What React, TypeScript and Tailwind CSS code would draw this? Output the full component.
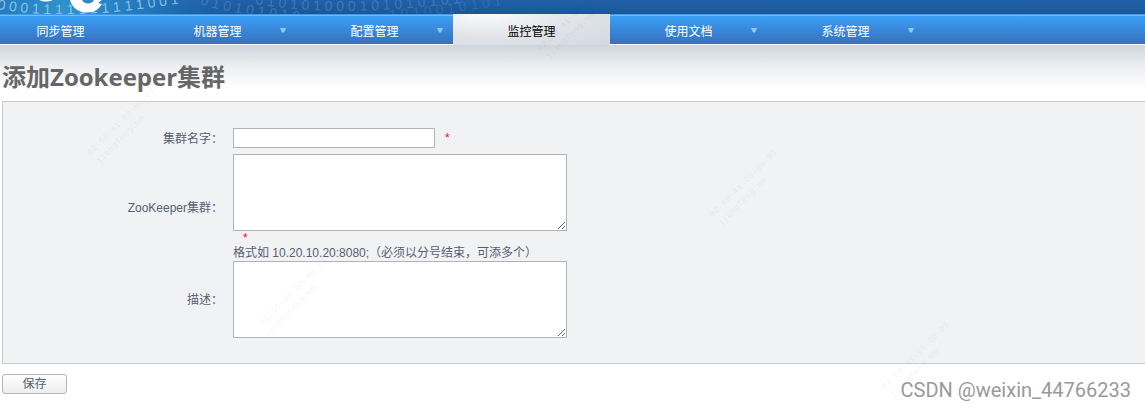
import React, { useState } from "react";
import clsx from "clsx";

type MenuItem = {
  label: string;
  active?: boolean;
  hasChildren?: boolean;
};

const menuItems: MenuItem[] = [
  { label: "同步管理" },
  { label: "机器管理", hasChildren: true },
  { label: "配置管理", hasChildren: true },
  { label: "监控管理", active: true },
  { label: "使用文档", hasChildren: true },
  { label: "系统管理", hasChildren: true },
];

const stampPositions = [
  "left-[80px] top-[114px]",
  "left-[530px] top-[10px]",
  "left-[252px] top-[284px]",
  "left-[702px] top-[176px]",
  "left-[874px] top-[348px]",
];

/* ---------- Banner with binary digits ---------- */
const Banner: React.FC = () => (
  <header className="h-3.5 overflow-hidden bg-linear-to-b from-[#2060a9] to-[#1b5797]">
    <svg
      width="620"
      height="14"
      viewBox="0 0 620 14"
      className="block font-['Liberation_Sans',sans-serif]"
      aria-hidden="true"
    >
      <defs>
        <radialGradient id="glow" gradientUnits="userSpaceOnUse" cx="65" cy="8" r="190">
          <stop offset="0" stopColor="#2f93cf" />
          <stop offset="0.45" stopColor="#2478bf" stopOpacity="0.9" />
          <stop offset="1" stopColor="#1e5da4" stopOpacity="0" />
        </radialGradient>
        <path id="arcBright" d="M-3 9 Q 70 22 182 3" />
        <path id="arcMid" d="M200 4 Q 235 15 310 22" />
        <path id="arcTop" d="M255 4 Q 335 18 460 3" />
        <path id="arcLow" d="M390 20 Q 440 15 510 4" />
      </defs>
      <rect width="300" height="14" fill="url(#glow)" />
      <g fontSize="14">
        <text fill="#9ad8ec" fillOpacity="0.8">
          <textPath href="#arcBright">0 0 0 1 1 1 1 1 1 1 1 1 1 0 0 1</textPath>
        </text>
        <text fill="#5b94cd" fillOpacity="0.5">
          <textPath href="#arcMid">0 1 0 1 0 1 0 1 0</textPath>
        </text>
        <text fill="#5b94cd" fillOpacity="0.5">
          <textPath href="#arcTop">0 1 0 1 0 1 0 0 0 1 0 1 0 1 0 1 0 1</textPath>
        </text>
        <text fill="#5b94cd" fillOpacity="0.3">
          <textPath href="#arcLow">1 0 1 0 0 1 0 1 0 1</textPath>
        </text>
      </g>
      <path d="M39 0 Q46 3 53 0 Z" fill="#fff" />
      <path
        d="M70 0 C72 8 79 12.5 87 12.5 C94 12.5 99 9 102 4 L98 3 L103 -1 L94 -1 C94 2 91 3.500 88 3.500 C85 3.500 82 2 82 -1 L70 -1 Z"
        fill="#fff"
      />
    </svg>
  </header>
);

/* ---------- Main menu ---------- */
const MainMenu: React.FC = () => (
  <nav className="overflow-hidden text-xs">
    <ul className="flex h-[31px] bg-white bg-[linear-gradient(#3d9bee_1px,#6fbcfb_1px,#6fbcfb_2px,#399ff6_2px,#3870bb)] bg-size-[100%_30px] bg-no-repeat">
      {menuItems.map((item) => (
        <li key={item.label} className="w-[157px] shrink-0 first:-ml-[18px]">
          <a
            href="#"
            className={clsx(
              "relative flex items-center justify-center",
              item.active
                ? "h-[31px] bg-[radial-gradient(ellipse_at_20%_0%,#fbfbfc_0%,#e2e4e9_50%,#d3d8e1_100%)] pt-1 text-black"
                : "h-[30px] pt-1.5 text-white"
            )}
          >
            {item.label}
            {item.hasChildren && (
              <svg
                width="6"
                height="5"
                viewBox="0 0 6 5"
                className="absolute top-3.5 right-2.5"
                aria-hidden="true"
              >
                <path d="M0 0H6L4 4.500H2Z" fill="#8cc8fa" />
              </svg>
            )}
          </a>
        </li>
      ))}
    </ul>
  </nav>
);

const labelClass = "self-center text-right";
const fieldClass = "block border border-[#b2b2b2] bg-white px-1 outline-none";

export default function App() {
  const [name, setName] = useState("");
  const [servers, setServers] = useState("");
  const [description, setDescription] = useState("");

  return (
    <div className="relative min-h-screen overflow-hidden bg-white font-['Liberation_Sans','Noto_Sans_CJK_SC',sans-serif] text-xs text-[#566072]">
      <Banner />
      <MainMenu />

      <main className="bg-linear-to-b from-[#cfd4de] via-[#eeeff2] via-50% to-white bg-size-[100%_44px] bg-no-repeat pl-0.5">
        <h1 className="pt-4 pb-2 font-['Open_Sans','Noto_Sans_CJK_SC',sans-serif] text-2xl font-bold text-[#666]">
          添加Zookeeper集群
        </h1>

        <form onSubmit={(e) => e.preventDefault()}>
          <div className="grid grid-cols-[220px_1fr] gap-x-2.5 border border-r-0 border-[#c8cacd] bg-[#f0f2f4] pt-[26px] pb-[25px]">
            <label htmlFor="name" className={clsx(labelClass, "pb-1")}>
              集群名字：
            </label>
            <div className="flex items-start pb-1.5">
              <input
                id="name"
                type="text"
                value={name}
                onChange={(e) => setName(e.target.value)}
                className={clsx(fieldClass, "h-5 w-[202px]")}
              />
              <span className="pt-0.5 pl-2.5 text-[#f03]">*</span>
            </div>

            <label htmlFor="servers" className={labelClass}>
              ZooKeeper集群：
            </label>
            <div>
              <textarea
                id="servers"
                value={servers}
                onChange={(e) => setServers(e.target.value)}
                className={clsx(fieldClass, "h-[77px] w-[334px]")}
              />
              <span className="block pl-2.5 leading-[14px] text-[#f03]">*</span>
              <p className="leading-4">格式如 10.20.10.20:8080;（必须以分号结束，可添多个）</p>
            </div>

            <label htmlFor="description" className={labelClass}>
              描述：
            </label>
            <textarea
              id="description"
              value={description}
              onChange={(e) => setDescription(e.target.value)}
              className={clsx(fieldClass, "h-[77px] w-[334px]")}
            />
          </div>

          <button
            type="submit"
            className="mt-2.5 block h-5 w-[65px] rounded-[3px] border border-[#b3b5b8] bg-linear-to-b from-white to-[#ededef]"
          >
            保存
          </button>
        </form>
      </main>

      {/* Stamps lying over the page */}
      {stampPositions.map((position) => (
        <div
          key={position}
          className={clsx(
            "pointer-events-none absolute -rotate-45 font-['Liberation_Mono',monospace] text-[9px] leading-3 font-bold whitespace-nowrap text-black/5",
            position
          )}
        >
          02-50-41-00-00-01
          <br />
          jiangfeng.mm
        </div>
      ))}
      <div className="pointer-events-none absolute right-3.5 bottom-1 font-[Roboto,sans-serif] text-xl text-[#999]">
        CSDN @weixin_44766233
      </div>
    </div>
  );
}
